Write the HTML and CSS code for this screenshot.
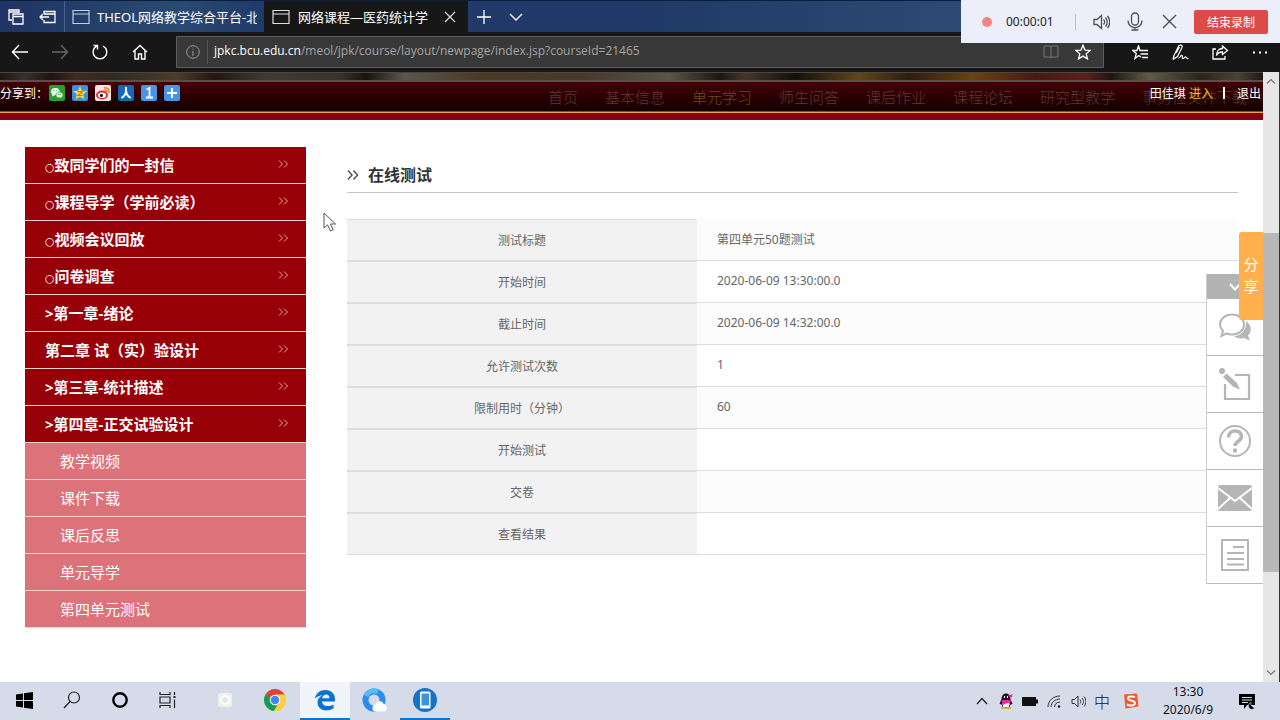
FILE: index.html
```html
<!DOCTYPE html>
<html lang="zh-CN">
<head>
<meta charset="utf-8">
<title>网络课程—医药统计学</title>
<link rel="stylesheet" href="styles.css">
</head>
<body>
<div class="desktop">
  <header class="tabbar">
    <button class="tab-tool" aria-label="标签页"><svg width="16" height="16" viewBox="0 0 16 16"><path d="M4 11H1V1h10v3M1 3h10M5 5h10v10H5zM5 7.5h10" fill="none" stroke="#fff" stroke-width="1.3"/></svg></button>
    <button class="tab-tool" aria-label="搁置标签页"><svg width="18" height="16" viewBox="0 0 18 16"><path d="M5 5V2.500h11v11H5V11M5 5h11M1 8h9M4 5L1 8l3 3" fill="none" stroke="#fff" stroke-width="1.3"/></svg></button>
    <div class="tab">
      <svg width="18" height="16" viewBox="0 0 18 16"><path d="M1 1.500h16v13H1zM1 5h16" fill="none" stroke="#c3cee0" stroke-width="1.2"/></svg>
      <span class="tab-title">THEOL网络教学综合平台-北</span>
    </div>
    <div class="tab tab-active">
      <svg width="18" height="16" viewBox="0 0 18 16"><path d="M1 1.500h16v13H1zM1 5h16" fill="none" stroke="#ddd" stroke-width="1.2"/></svg>
      <span class="tab-title">网络课程—医药统计学</span>
      <button class="tab-close" aria-label="关闭标签页"><svg width="12" height="12" viewBox="0 0 12 12"><path d="M1 1l10 10M11 1L1 11" stroke="#ddd" stroke-width="1.2"/></svg></button>
    </div>
    <button class="tab-tool" aria-label="新建标签页"><svg width="14" height="14" viewBox="0 0 14 14"><path d="M7 0v14M0 7h14" stroke="#fff" stroke-width="1.3"/></svg></button>
    <button class="tab-tool" aria-label="标签预览"><svg width="14" height="8" viewBox="0 0 14 8"><path d="M1 1l6 6 6-6" fill="none" stroke="#fff" stroke-width="1.3"/></svg></button>
  </header>

  <div class="toolbar">
    <button class="nav-button" aria-label="后退"><svg width="18" height="16" viewBox="0 0 18 16"><path d="M17 8H1.500M8 1L1.500 8 8 15" fill="none" stroke="#fff" stroke-width="1.4"/></svg></button>
    <button class="nav-button" aria-label="前进"><svg width="18" height="16" viewBox="0 0 18 16"><path d="M1 8h15.500M10 1l6.500 7-6.500 7" fill="none" stroke="#666" stroke-width="1.400"/></svg></button>
    <button class="nav-button" aria-label="刷新"><svg width="16" height="16" viewBox="0 0 16 16"><path d="M11 2a6.800 6.800 0 1 1-6.500.2M1.500 1.500h4v4" fill="none" stroke="#fff" stroke-width="1.400"/></svg></button>
    <button class="nav-button" aria-label="主页"><svg width="16" height="16" viewBox="0 0 16 16"><path d="M1 8l7-6.500L15 8M3 6.500V15h3.500v-5h3v5H13V6.500" fill="none" stroke="#fff" stroke-width="1.400"/></svg></button>
    <div class="address">
      <svg width="14" height="14" viewBox="0 0 14 14"><circle cx="7" cy="7" r="6.300" fill="none" stroke="#999"/><path d="M7 6v5M7 3.500v1.200" stroke="#999"/></svg>
      <a class="url" href="#"><b>jpkc.bcu.edu.cn</b>/meol/jpk/course/layout/newpage/index.jsp?courseId=21465</a>
      <button class="address-button" aria-label="阅读视图"><svg width="16" height="14" viewBox="0 0 16 14"><path d="M1 1h6l1 1 1-1h6v11H9l-1 1-1-1H1zM8 2v11" fill="none" stroke="#777"/></svg></button>
      <button class="address-button" aria-label="添加到收藏夹"><svg width="16" height="16" viewBox="0 0 16 16"><path d="M8 1.200l2 4.900 5.200.3-4 3.400 1.300 5.100L8 12.100l-4.500 2.800 1.300-5.100-4-3.400 5.200-.3z" fill="none" stroke="#fff" stroke-width="1.300"/></svg></button>
    </div>
    <button class="nav-button" aria-label="中心"><svg width="16" height="15" viewBox="0 0 16 15"><path d="M10 5.500H8L6.500 1 5 5.500H.8L4.300 8.500 3 13.500l3.800-3L9 12M9 5.500h7M8.500 9H16M10 12.500h6" fill="none" stroke="#fff" stroke-width="1.300"/></svg></button>
    <button class="nav-button" aria-label="添加笔记"><svg width="17" height="17" viewBox="0 0 17 17"><path d="M1 15.500l1-4L7 1.500c2-1 4 0 3 2L5.500 12.500 1 15.500M4 9l3.500-6M6.500 14c2 0 2-3 3.500-2.500s-.5 3 1 3 1.500-2 2.800-1.500.5 2 2.700 1.500" fill="none" stroke="#fff" stroke-width="1.200"/></svg></button>
    <button class="nav-button" aria-label="共享"><svg width="17" height="15" viewBox="0 0 17 15"><path d="M4 4H1v10h12v-3M10.500 1l5 4.500-5 4V7C7.500 7 5.500 8 4.500 10.500 4.500 6 7 3.500 10.500 3.500z" fill="none" stroke="#fff" stroke-width="1.300"/></svg></button>
    <button class="nav-button" aria-label="更多"><svg width="16" height="3" viewBox="0 0 16 3"><path d="M1 .5h2v2H1zM7 .5h2v2H7zM13 .5h2v2h-2z" fill="#fff"/></svg></button>
  </div>

  <div class="viewport">
    <div class="page">
      <div class="banner"></div>
      <div class="masthead">
        <nav class="site-nav">
          <a href="#">首页</a><a href="#">基本信息</a><a href="#" class="current">单元学习</a><a href="#">师生问答</a><a href="#">课后作业</a><a href="#">课程论坛</a><a href="#">研究型教学</a><a href="#">事务性文件下载</a>
        </nav>
        <div class="userbar">
          <span class="share-label">分享到：</span>
          <a href="#" class="share" aria-label="微信"><svg width="16" height="16" viewBox="0 0 16 16"><rect width="16" height="16" rx="2" fill="#27a02b"/><ellipse cx="6.300" cy="6.500" rx="4.300" ry="3.600" fill="#fff"/><path d="M3.500 9l-.5 2.500L6 10z" fill="#fff"/><ellipse cx="10.500" cy="10" rx="3.600" ry="3" fill="#fff" stroke="#27a02b" stroke-width=".7"/><path d="M4.500 5.500h1M7.300 5.500h1M9 9.500h1M11.200 9.500h1" stroke="#27a02b"/></svg></a>
          <a href="#" class="share" aria-label="QQ空间"><svg width="16" height="16" viewBox="0 0 16 16"><rect width="16" height="16" rx="2" fill="#3b92dc"/><path d="M8 1l2 4.700 5 .4-3.800 3.300 1.200 5L8 11.800l-4.400 2.600 1.200-5L1 6.100l5-.4z" fill="#ffd43c"/><path d="M5.500 6.500h5L6 10.500h4.500" fill="none" stroke="#e66d17" stroke-width="1.200"/></svg></a>
          <a href="#" class="share" aria-label="新浪微博"><svg width="16" height="16" viewBox="0 0 16 16"><rect width="16" height="16" rx="2" fill="#f7e5df"/><ellipse cx="7" cy="10" rx="6" ry="4.400" fill="#df2934"/><ellipse cx="7" cy="10.200" rx="4" ry="2.800" fill="#fff"/><circle cx="6.400" cy="10.400" r="1.700" fill="#222"/><path d="M9 3c4-1 6 2 4.500 5M9.500 5c2-.4 2.800.6 2 2.500" fill="none" stroke="#ec7223" stroke-width="1.300"/></svg></a>
          <a href="#" class="share" aria-label="人人网"><svg width="16" height="16" viewBox="0 0 16 16"><rect width="16" height="16" rx="2" fill="#1468b5"/><path d="M8 2v4c0 3-2 5.500-4.500 7M8 5c0 4 2 6.500 4.700 8" fill="none" stroke="#fff" stroke-width="2"/></svg></a>
          <a href="#" class="share" aria-label="一键分享"><svg width="16" height="16" viewBox="0 0 16 16"><rect width="16" height="16" rx="2" fill="#4b94e4"/><path d="M5.500 4.500L8.500 3v9M5 12.500h7" fill="none" stroke="#fff" stroke-width="1.800"/></svg></a>
          <a href="#" class="share" aria-label="更多分享"><svg width="16" height="16" viewBox="0 0 16 16"><rect width="16" height="16" rx="2" fill="#4b94e4"/><path d="M8 3v10M3 8h10" stroke="#fff" stroke-width="2"/></svg></a>
          <span class="user">田佳琪 <a href="#" class="enter">进入</a></span><span class="divider"></span><a href="#">退出</a>
        </div>
      </div>

      <div class="content">
        <ul class="menu">
          <li><a href="#"><span><span class="bullet">○</span>致同学们的一封信</span><svg width="10" height="8" viewBox="0 0 10 8"><path d="M1 .5L4.500 4 1 7.500M6 .5L9.500 4 6 7.500"/></svg></a></li>
          <li><a href="#"><span><span class="bullet">○</span>课程导学（学前必读）</span><svg width="10" height="8" viewBox="0 0 10 8"><path d="M1 .5L4.500 4 1 7.500M6 .5L9.500 4 6 7.500"/></svg></a></li>
          <li><a href="#"><span><span class="bullet">○</span>视频会议回放</span><svg width="10" height="8" viewBox="0 0 10 8"><path d="M1 .5L4.500 4 1 7.500M6 .5L9.500 4 6 7.500"/></svg></a></li>
          <li><a href="#"><span><span class="bullet">○</span>问卷调查</span><svg width="10" height="8" viewBox="0 0 10 8"><path d="M1 .5L4.500 4 1 7.500M6 .5L9.500 4 6 7.500"/></svg></a></li>
          <li><a href="#"><span>&gt;第一章-绪论</span><svg width="10" height="8" viewBox="0 0 10 8"><path d="M1 .5L4.500 4 1 7.500M6 .5L9.500 4 6 7.500"/></svg></a></li>
          <li><a href="#"><span>第二章 试（实）验设计</span><svg width="10" height="8" viewBox="0 0 10 8"><path d="M1 .5L4.500 4 1 7.500M6 .5L9.500 4 6 7.500"/></svg></a></li>
          <li><a href="#"><span>&gt;第三章-统计描述</span><svg width="10" height="8" viewBox="0 0 10 8"><path d="M1 .5L4.500 4 1 7.500M6 .5L9.500 4 6 7.500"/></svg></a></li>
          <li><a href="#"><span>&gt;第四章-正交试验设计</span><svg width="10" height="8" viewBox="0 0 10 8"><path d="M1 .5L4.500 4 1 7.500M6 .5L9.500 4 6 7.500"/></svg></a></li>
          <li class="sub"><a href="#">教学视频</a></li>
          <li class="sub"><a href="#">课件下载</a></li>
          <li class="sub"><a href="#">课后反思</a></li>
          <li class="sub"><a href="#">单元导学</a></li>
          <li class="sub"><a href="#">第四单元测试</a></li>
        </ul>
        <main class="main">
          <h1 class="heading"><svg width="12" height="10" viewBox="0 0 12 10"><path d="M1 .5L5 5 1 9.500M6.500 .5l4 4.500-4 4.500" fill="none" stroke="#555" stroke-width="1.500"/></svg>在线测试</h1>
          <table class="details">
            <tr><th scope="row">测试标题</th><td>第四单元50题测试</td></tr>
            <tr><th scope="row">开始时间</th><td>2020-06-09 13:30:00.0</td></tr>
            <tr><th scope="row">截止时间</th><td>2020-06-09 14:32:00.0</td></tr>
            <tr><th scope="row">允许测试次数</th><td>1</td></tr>
            <tr><th scope="row">限制用时（分钟）</th><td>60</td></tr>
            <tr><th scope="row">开始测试</th><td></td></tr>
            <tr><th scope="row">交卷</th><td></td></tr>
            <tr><th scope="row">查看结果</th><td></td></tr>
          </table>
        </main>
      </div>

      <aside class="dock">
        <button class="dock-toggle" aria-label="收起"><svg width="12" height="8" viewBox="0 0 12 8"><path d="M1 1l5 5.500L11 1" fill="none" stroke="#fff" stroke-width="2"/></svg></button>
        <button class="dock-item" aria-label="讨论"><svg width="34" height="30" viewBox="0 0 34 30"><path d="M28 9c6 4 6 11 2 14.500l2 5-6-2.500c-4 1-8 0-10-2 8 0 13-7 12-15z" fill="#b5b5b5"/><path d="M14 2.500c7 0 12 4.500 12 10s-5 10-12 10c-2 0-4-.4-5.500-1.200L3.500 24l1.500-5C3 17 2 15 2 12.500c0-5.500 5-10 12-10z" fill="#fff" stroke="#b5b5b5" stroke-width="2"/></svg></button>
        <button class="dock-item" aria-label="笔记"><svg width="34" height="34" viewBox="0 0 34 34"><path d="M17 8h14v24H7V17" fill="none" stroke="#b5b5b5" stroke-width="2.200"/><path d="M8.500 6.500L19 16l3 6.500-6.500-2.500L5 10z" fill="#b5b5b5"/><circle cx="4" cy="4" r="3" fill="#b5b5b5"/></svg></button>
        <button class="dock-item" aria-label="帮助"><svg width="34" height="34" viewBox="0 0 34 34"><circle cx="17" cy="17" r="15" fill="none" stroke="#b5b5b5" stroke-width="2"/><path d="M10.500 13.500C10.500 5 23.500 5 23.500 12.500c0 5-6.500 4.500-6.500 9.500" fill="none" stroke="#b5b5b5" stroke-width="3.600"/><circle cx="17" cy="26.500" r="2.200" fill="#b5b5b5"/></svg></button>
        <button class="dock-item" aria-label="邮件"><svg width="34" height="26" viewBox="0 0 34 26"><rect width="34" height="26" rx="2" fill="#b5b5b5"/><path d="M0 3l17 13L34 3M0 24l12-11M34 24L22 13" fill="none" stroke="#fff" stroke-width="2"/></svg></button>
        <button class="dock-item" aria-label="文档"><svg width="30" height="34" viewBox="0 0 30 34"><path d="M2 2h26v30H2z" fill="none" stroke="#b5b5b5" stroke-width="2"/><path d="M13 9h11M7 15h17M7 21h17M7 26.500h17" stroke="#b5b5b5" stroke-width="2"/></svg></button>
      </aside>
      <button class="share-tab">分享</button>
      <svg class="cursor" width="14" height="20" viewBox="0 0 14 20"><path d="M1 1v15l3.600-3.200L7.500 19l2.700-1.200L7.500 12h5z" fill="#fff" stroke="#555"/></svg>
    </div>
    <div class="scrollbar">
      <svg width="10" height="6" viewBox="0 0 10 6"><path d="M1 5.500L5 1.500 9 5.500" fill="none" stroke="#777" stroke-width="1.200"/></svg>
      <div class="track"><div class="thumb"></div></div>
      <svg width="10" height="6" viewBox="0 0 10 6"><path d="M1 .5l4 4 4-4" fill="none" stroke="#777" stroke-width="1.200"/></svg>
    </div>
  </div>

  <footer class="taskbar">
    <button class="task" aria-label="开始"><svg width="17" height="17" viewBox="0 0 17 17"><path d="M0 2.500l7-1V8H0zM8 1.300L17 0v8H8zM0 9h7v6.500l-7-1zM8 9h9v8l-9-1.300z" fill="#000"/></svg></button>
    <button class="task" aria-label="搜索"><svg width="18" height="18" viewBox="0 0 18 18"><circle cx="11" cy="6.500" r="5.500" fill="none" stroke="#222" stroke-width="1.200"/><path d="M7 10.500L1 17" stroke="#222" stroke-width="1.300"/></svg></button>
    <button class="task" aria-label="Cortana"><svg width="16" height="16" viewBox="0 0 16 16"><circle cx="8" cy="8" r="6.700" fill="none" stroke="#000" stroke-width="2.400"/></svg></button>
    <button class="task" aria-label="任务视图"><svg width="18" height="16" viewBox="0 0 18 16"><path d="M1 0v2.500h10V0M1 5h10v6H1zM1 16v-2.500h10V16M15.500 0v3M15.500 7.500V16" fill="none" stroke="#222" stroke-width="1.200"/><path d="M14.500 4h2v2h-2z" fill="#222"/></svg></button>
    <button class="task app" aria-label="应用"><svg width="16" height="16" viewBox="0 0 16 16"><rect x="1" y="1" width="14" height="14" rx="3" fill="#eef0ea"/><circle cx="8" cy="8" r="4" fill="#e2e6ee" stroke="#fff" stroke-width="2"/></svg></button>
    <button class="task app" aria-label="Chrome"><svg width="22" height="22" viewBox="0 0 22 22"><circle cx="11" cy="11" r="11" fill="#ffcd40"/><path d="M11 11L1.500 5.500A11 11 0 0 1 20.500 5.500z" fill="#db4437"/><path d="M1.500 5.500A11 11 0 0 0 10 22l5-9-4-2z" fill="#0f9d58"/><path d="M11 5.500h9.500A11 11 0 0 1 10 22l5.500-9z" fill="#ffcd40"/><circle cx="11" cy="11" r="5.300" fill="#fff"/><circle cx="11" cy="11" r="4.300" fill="#4285f4"/></svg></button>
    <button class="task app app-active" aria-label="Edge"><svg width="22" height="22" viewBox="0 0 22 22"><path d="M1 9.500C2 4 6 1 11.500 1 17.500 1 21 5 21 10v2.500H8c.2 5 7 5.700 11.500 3v4C12 23.500 3.500 21 3.500 13.500c0-3.500 2-6 5-7.300C6 6.500 3 7.500 1 9.500zM8.200 9.200h7.300c0-5-6.500-5-7.300 0z" fill="#0a74d0" fill-rule="evenodd"/></svg></button>
    <button class="task app" aria-label="QQ浏览器"><svg width="26" height="24" viewBox="0 0 26 24"><circle cx="12" cy="12" r="8.500" fill="none" stroke="#2b8dea" stroke-width="6"/><path d="M4 8a9 9 0 0 1 12-4.500" fill="none" stroke="#59bcf5" stroke-width="5"/><path d="M14 23.500a3.500 3.500 0 0 1 0-7c1-4.500 7-4 7.500-.5 4 0 4.500 7.500 0 7.500z" fill="#fff"/></svg></button>
    <button class="task app app-open" aria-label="手机助手"><svg width="24" height="24" viewBox="0 0 24 24"><circle cx="12" cy="12" r="12" fill="#1673c8"/><rect x="7" y="3.500" width="10.500" height="17" rx="1.500" fill="#fff"/><rect x="8.500" y="5.500" width="7.500" height="12" fill="#3f92dc"/></svg></button>
    <div class="tray">
      <button class="tray-item" aria-label="显示隐藏的图标"><svg width="12" height="8" viewBox="0 0 12 8"><path d="M1 7l5-5.500L11 7" fill="none" stroke="#222" stroke-width="1.300"/></svg></button>
      <button class="tray-item" aria-label="QQ"><svg width="14" height="16" viewBox="0 0 14 16"><path d="M2.500 6C2.500-1.500 11.500-1.500 11.500 6l2 5-2 .5c-1 5-8 5-9 0l-2-.5z" fill="#201626"/><ellipse cx="7" cy="11" rx="3.500" ry="3.500" fill="#fff"/><path d="M2.500 7h9v2.500L7 10.500 4 12zM9 1l2 1 2.500-1-.5 3.500-3-1z" fill="#ee27a6"/><path d="M5 4h1M8 4h1" stroke="#fff" stroke-width="2"/><path d="M2 15h4M8 15h4" stroke="#edae22" stroke-width="2"/></svg></button>
      <button class="tray-item" aria-label="电池"><svg width="16" height="9" viewBox="0 0 16 9"><path d="M0 0h14v2.500h2v4h-2V9H0z" fill="#111"/></svg></button>
      <button class="tray-item" aria-label="网络"><svg width="14" height="13" viewBox="0 0 14 13"><path d="M1 12C1 6 6 1 13 1M4 12c0-4.500 4-8 9-8M7.500 12c0-3 2.500-5 5.500-5" fill="none" stroke="#333"/><circle cx="12" cy="11.500" r="1.300" fill="#222"/></svg></button>
      <button class="tray-item" aria-label="音量"><svg width="15" height="13" viewBox="0 0 15 13"><path d="M1 4.500h2.500L7 1v11L3.500 8.500H1zM9 4.500c1 1 1 3 0 4M11 3c2 2 2 5 0 7M13 1.500c2.500 3 2.500 7 0 10" fill="none" stroke="#333"/></svg></button>
      <button class="tray-item ime">中</button>
      <button class="tray-item sogou" aria-label="搜狗输入法"><svg width="16" height="16" viewBox="0 0 16 16"><path d="M1 1.500L14 .5l1.500 13-13 2z" fill="#f1592b"/><path d="M12 4c-3-1-7-.8-7 1.500C5 8 12 7 12 10s-5 3-8 1.500" fill="none" stroke="#fff" stroke-width="2"/></svg></button>
    </div>
    <time class="clock"><span>13:30</span><span>2020/6/9</span></time>
    <button class="notice" aria-label="通知"><svg width="17" height="17" viewBox="0 0 17 17"><path d="M0 1h16v11H8l-3 4v-4H0z" fill="#000"/><path d="M3 4.500h10M3 7h10M3 9.500h6" stroke="#d7dcea"/><path d="M12 9.500a3.500 3.500 0 1 0 4 5 4 4 0 0 1-4-5z" fill="#000" stroke="#d7dcea" stroke-width=".7"/></svg></button>
  </footer>

  <div class="recorder">
    <span class="record-dot"></span>
    <span class="record-time">00:00:01</span>
    <span class="record-line"></span>
    <button class="record-button" aria-label="声音"><svg width="17" height="16" viewBox="0 0 17 16"><path d="M1 5.500h3L8.500 1.500v13L4 10.500H1zM10.500 5.500c1.300 1.300 1.300 3.700 0 5M12.500 3.500c2.300 2.500 2.300 6.500 0 9M14.500 2c3 3.500 3 8.500 0 12" fill="none" stroke="#4b4f5c" stroke-width="1.300"/></svg></button>
    <button class="record-button" aria-label="麦克风"><svg width="16" height="19" viewBox="0 0 16 19"><rect x="4.500" y="1" width="7" height="12" rx="3.500" fill="none" stroke="#4b4f5c" stroke-width="1.300"/><path d="M1 8.500c0 9.500 14 9.500 14 0M8 15.500V18M4.500 18h7" fill="none" stroke="#4b4f5c" stroke-width="1.300"/></svg></button>
    <button class="record-button" aria-label="关闭"><svg width="15" height="15" viewBox="0 0 15 15"><path d="M1 1l13 13M14 1L1 14" stroke="#4b4f5c" stroke-width="1.400"/></svg></button>
    <button class="record-stop">结束录制</button>
  </div>
</div>
</body>
</html>
```
FILE: styles.css
```css
* { box-sizing: border-box; }
body { margin: 0; font-family: "Noto Sans", "Noto Sans CJK SC", sans-serif; font-size: 12px; }
button { padding: 0; border: 0; background: none; font: inherit; color: inherit; display: flex; align-items: center; justify-content: center; }
a { color: inherit; text-decoration: none; }
svg { flex: none; display: block; }

.desktop { position: relative; display: flex; flex-direction: column; height: 100vh; overflow: hidden; }

/* Browser chrome */
.tabbar { display: flex; height: 32px; border-top: 1px solid #0c1c3b; background: linear-gradient(90deg, #1f3465 0%, #2a4a70 14%, #213a6c 20%, #203968 50%, #2c4a74 75%, #2a446c 100%); color: #fff; }
.tab-tool { width: 32px; }
.tab { display: flex; align-items: center; gap: 7px; width: 200px; padding: 0 7px; border-left: 1px solid #4a628b; font-size: 13px; }
.tab-title { flex: 1; overflow: hidden; white-space: nowrap; }
.tab-active { gap: 8px; width: 204px; padding: 0 8px; border-left: 0; background: #171717; }
.tab-close { width: 20px; height: 20px; }
.toolbar { display: flex; align-items: center; height: 40px; background: #171717; }
.nav-button { width: 40px; height: 32px; }
.address { flex: 1; display: flex; align-items: center; height: 32px; margin: 0 16px; padding: 0 4px 0 9px; border: 1px solid #5c5c5c; background: #383838; }
.url { flex: 1; margin-left: 7px; padding: 0 0 2px 6px; border-left: 1px solid #555; color: #a5a5a5; font-family: "Open Sans", sans-serif; font-size: 12px; line-height: 22px; white-space: nowrap; overflow: hidden; }
.url b { color: #fff; font-weight: 400; }
.address-button { width: 32px; height: 28px; }

/* Page */
.viewport { flex: 1; display: flex; min-height: 0; border-right: 1px solid #333; }
.page { position: relative; flex: 1; min-width: 0; overflow: hidden; background: #fff; }
.banner { height: 10px; border-top: 1px solid #4c4641; border-bottom: 2px solid #57504a; background: linear-gradient(90deg, #1d1712 0%, #3a3027 2%, #1c1511 4%, #41291f 6%, #2f2a22 9%, #4a3d2a 14%, #241611 17%, #403a31 21%, #37322a 27%, #17130f 29%, #5a564e 32%, #4b3a22 38%, #46392c 46%, #5a5546 53%, #1b1613 57%, #45362a 59%, #12100e 63%, #614618 68%, #2c1d10 72%, #6b4310 77%, #4b1713 82%, #5a2018 86%, #1d1613 88%, #635a45 91%, #2b241c 95%, #4c4230 98%, #1d1713 100%); }
.masthead { position: relative; height: 38px; border-bottom: 7px solid #850009; background: linear-gradient(#450004, #120001 29px, #e9a446 30px, #e9a446 31px); }
.site-nav { display: flex; gap: 27px; justify-content: flex-end; height: 30px; padding-right: 16px; color: #5b3936; font-family: "Liberation Serif", "Noto Sans CJK SC", serif; font-size: 15px; font-weight: 300; line-height: 33px; white-space: nowrap; }
.site-nav .current { color: #6c4b0e; }
.userbar { position: absolute; inset: 0 0 auto 0; display: flex; align-items: center; height: 22px; color: #fff; }
.share-label { width: 49px; }
.share { margin-right: 7px; }
.user { margin-left: auto; }
.enter { color: #f4c22f; }
.divider { width: 2px; height: 12px; margin: 0 12px 0 10px; background: #fff; }
.divider + a { margin-right: 2px; }

.content { display: flex; gap: 41px; padding: 27px 25px 0; }
.menu { width: 281px; margin: 0; padding: 0; list-style: none; font-size: 15px; }
.menu li { border-bottom: 1px solid #f4d0d0; background: #980008; color: #fff; font-weight: 700; }
.menu a { display: flex; align-items: center; justify-content: space-between; height: 36px; padding: 0 18px 2px 20px; }
.menu path { fill: none; stroke: #e8a0a4; }
.bullet { font-family: "DejaVu Sans", sans-serif; font-size: 11px; font-weight: 400; }
.menu .sub { background: #dc727a; font-weight: 400; }
.menu .sub a { padding-left: 35px; }
.main { flex: 1; min-width: 0; }
.heading { display: flex; align-items: center; gap: 9px; height: 46px; margin: 0 0 26px; padding-top: 11px; border-bottom: 1px solid #c4c4c4; color: #333; font-size: 16px; line-height: 24px; }
.details { width: 100%; border-collapse: separate; border-spacing: 0; color: #666; }
.details th { width: 350px; height: 42px; padding: 0; border-top: 1px solid #dcdcdc; border-bottom: 1px solid #dcdcdc; background: #f2f2f2; font-weight: 400; text-align: center; }
.details td { padding: 0 20px 2px; border-bottom: 1px solid #dcdcdc; }
.details tr:nth-child(odd) td { background: #fcfcfc; }

.dock { position: absolute; top: 202px; right: 0; width: 57px; border-left: 1px solid #ccc; background: #fff; }
.dock-toggle { width: 100%; height: 25px; background: #b3b3b3; }
.dock-item { width: 100%; height: 57px; border-bottom: 1px solid #bbb; }
.share-tab { position: absolute; top: 160px; right: 0; width: 24px; height: 88px; padding: 0 4px 2px; border-radius: 3px 0 0 3px; background: #ffb04d; color: #fff; font-size: 15px; line-height: 22px; }
.cursor { position: absolute; top: 140px; left: 323px; }
.scrollbar { display: flex; flex-direction: column; align-items: center; width: 16px; padding: 6px 0; background: #e6e6e6; }
.track { flex: 1; display: flex; flex-direction: column; width: 100%; padding: 149px 0 98px; }
.thumb { flex: 1; background: #b8b8b8; }

/* Taskbar */
.taskbar { display: flex; align-items: center; height: 38px; background: #d6dbea; color: #111; }
.task { width: 48px; height: 38px; border-bottom: 2px solid transparent; }
.app { width: 50px; }
.task:nth-child(5) { margin-left: 8px; }
.app-active { border-color: #1674c4; background: #f1f4fa; }
.app-open { border-color: #1674c4; }
.tray { display: flex; margin-left: auto; }
.tray-item { width: 24px; height: 32px; }
.ime { font-size: 16px; font-weight: 300; }
.sogou { width: 34px; }
.clock { display: flex; flex-direction: column; width: 80px; text-align: center; line-height: 18px; }
.notice { width: 32px; height: 32px; margin: 0 17px 0 3px; }

/* Screen recorder */
.recorder { position: absolute; top: 0; right: 0; display: flex; align-items: center; width: 319px; height: 43px; padding: 0 12px 0 21px; background: #eceffa; color: #222; }
.record-dot { width: 10px; height: 10px; border-radius: 5px; background: #f48484; }
.record-time { margin-left: 14px; }
.record-line { width: 1px; height: 16px; margin-left: auto; margin-right: 8px; background: #b9bdc9; }
.record-button { width: 34px; height: 32px; }
.record-stop { width: 74px; height: 24px; margin-left: 8px; border-radius: 2px; background: #dd4b47; color: #fff; }
```
